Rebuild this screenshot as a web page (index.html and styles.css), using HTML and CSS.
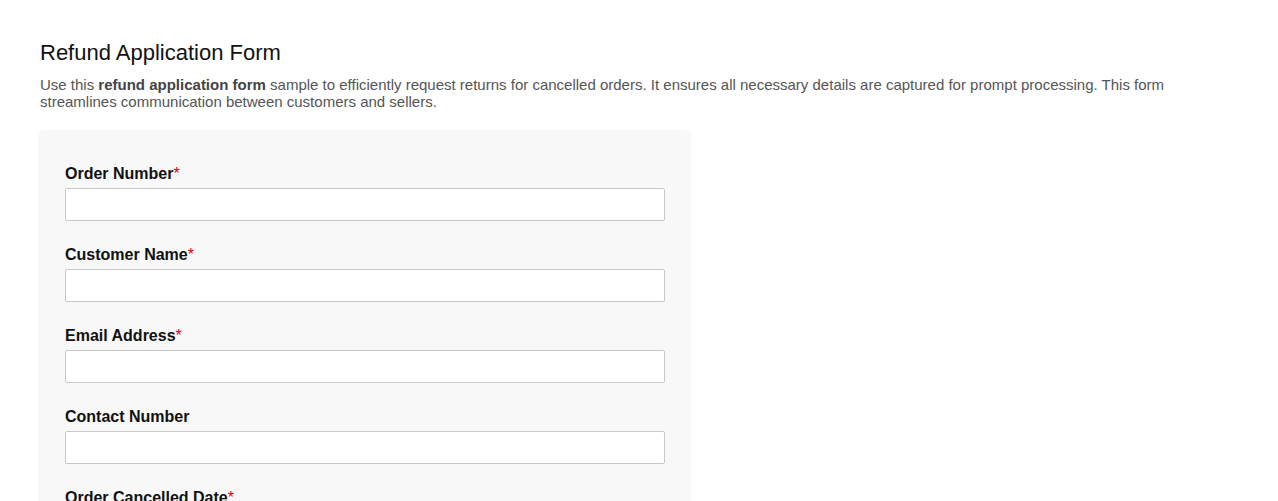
FILE: index.html
```html
<!DOCTYPE html>
<html lang="en">
<head>
<meta charset="utf-8">
<title>Refund Application Form</title>
<link rel="stylesheet" href="styles.css">
</head>
<body>
<div class="page">
  <h1 class="title">Refund Application Form</h1>
  <p class="desc">Use this <strong>refund application form</strong> sample to efficiently request returns for cancelled orders. It ensures all necessary details are captured for prompt processing. This form streamlines communication between customers and sellers.</p>
  <form class="card">
    <div class="field">
      <label class="label">Order Number<span class="req">*</span></label>
      <input class="input" type="text">
    </div>
    <div class="field">
      <label class="label">Customer Name<span class="req">*</span></label>
      <input class="input" type="text">
    </div>
    <div class="field">
      <label class="label">Email Address<span class="req">*</span></label>
      <input class="input" type="text">
    </div>
    <div class="field">
      <label class="label">Contact Number</label>
      <input class="input" type="text">
    </div>
    <div class="field">
      <label class="label">Order Cancelled Date<span class="req">*</span></label>
      <input class="input" type="text">
    </div>
  </form>
</div>
</body>
</html>
```

FILE: styles.css
```css
html, body {
  margin: 0;
  padding: 0;
  background: #fff;
}
body {
  font-family: "Liberation Sans", Arial, sans-serif;
}
.page {
  padding: 40px 40px 40px 40px;
  width: 1198px;
  box-sizing: content-box;
}
.title {
  margin: 0;
  font-size: 22px;
  line-height: 26px;
  font-weight: normal;
  color: #111;
}
.desc {
  margin: 10px 0 0 0;
  font-size: 15px;
  line-height: 17px;
  color: #555;
}
.desc strong {
  color: #444;
}
.card {
  margin: 20px 0 0 -2px;
  width: 653px;
  box-sizing: border-box;
  padding: 33px 26px 20px 27px;
  background: #f8f8f8;
  border-radius: 6px;
}
.field {
  display: flex;
  flex-direction: column;
  margin-bottom: 23px;
}
.label {
  font-size: 16px;
  line-height: 20px;
  font-weight: bold;
  color: #111;
  margin-top: 1px;
  margin-bottom: 4px;
}
.req {
  color: #d0021b;
  font-weight: normal;
}
.input {
  width: 600px;
  height: 33px;
  box-sizing: border-box;
  border: 1px solid #c8c8c8;
  border-radius: 2px;
  background: #fff;
  margin: 0;
  padding: 0 8px;
  font-family: inherit;
  font-size: 14px;
}
```
